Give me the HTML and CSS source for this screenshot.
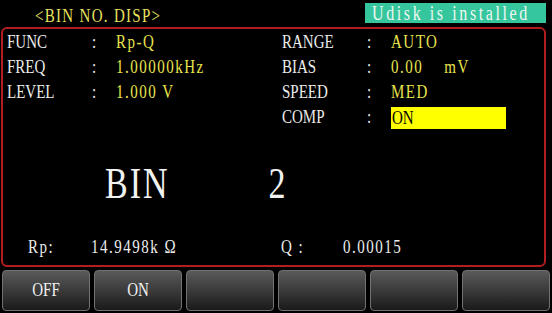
FILE: index.html
```html
<!DOCTYPE html>
<html lang="en">
<head>
    <meta charset="UTF-8">
    <meta name="viewport" content="width=device-width, initial-scale=1.0">
    <title>BIN NO. DISP</title>
    <link rel="stylesheet" href="styles.css">
</head>
<body>
    <div class="screen">
        <header class="topbar">
            <span class="title">&lt;BIN NO. DISP&gt;</span>
            <span class="udisk"><span class="txt">Udisk is installed</span></span>
        </header>

        <main class="panel">
            <div class="params">
                <div class="col">
                    <div class="row"><span class="key">FUNC</span><span class="sep">:</span><span class="val">Rp-Q</span></div>
                    <div class="row"><span class="key">FREQ</span><span class="sep">:</span><span class="val">1.00000kHz</span></div>
                    <div class="row"><span class="key">LEVEL</span><span class="sep">:</span><span class="val">1.000 V</span></div>
                </div>
                <div class="col">
                    <div class="row"><span class="key">RANGE</span><span class="sep">:</span><span class="val">AUTO</span></div>
                    <div class="row"><span class="key">BIAS</span><span class="sep">:</span><span class="val">0.00    mV</span></div>
                    <div class="row"><span class="key">SPEED</span><span class="sep">:</span><span class="val">MED</span></div>
                    <div class="row"><span class="key">COMP</span><span class="sep">:</span><span class="hl"><span class="val">ON</span></span></div>
                </div>
            </div>

            <div class="bin">
                <span class="big">BIN</span>
                <span class="big num">2</span>
            </div>

            <div class="reading">
                <span class="txt">Rp:</span>
                <span class="txt">14.9498k Ω</span>
                <span class="txt">Q :</span>
                <span class="txt">0.00015</span>
            </div>
        </main>

        <nav class="softkeys">
            <button><span class="txt">OFF</span></button>
            <button><span class="txt">ON</span></button>
            <button></button>
            <button></button>
            <button></button>
            <button></button>
        </nav>
    </div>
</body>
</html>
```

FILE: styles.css
```css
* {
    box-sizing: border-box;
}

body {
    margin: 0;
    background-color: #000000;
    color: #ececec;
    font-family: "Liberation Serif", "Times New Roman", serif;
    font-size: 15px;
}

.screen {
    width: 552px;
    height: 313px;
    display: flex;
    flex-direction: column;
    overflow: hidden;
}

/* header */
.topbar {
    height: 27px;
    display: flex;
    align-items: flex-start;
    padding: 0 6px 0 35px;
}

.title {
    display: inline-block;
    margin-top: 6px;
    line-height: 18px;
    color: #e8e25e;
    letter-spacing: 1.3px;
    white-space: pre;
    transform: scaleY(1.3);
}

.udisk {
    margin-left: auto;
    margin-top: 3px;
    width: 181px;
    height: 20px;
    padding-left: 7px;
    line-height: 20px;
    background-color: #36c69e;
    color: #eef8f2;
    font-size: 16px;
    letter-spacing: 2.6px;
}

/* main panel */
.panel {
    width: 545px;
    height: 240px;
    margin-left: 1px;
    border: 2px solid #b21d1f;
    border-radius: 6px;
    display: flex;
    flex-direction: column;
}

.params {
    display: grid;
    grid-template-columns: 275px 1fr;
    padding: 1px 0 0 4px;
}

.row {
    display: grid;
    grid-template-columns: 85px 24px 1fr;
    align-items: center;
    height: 25px;
}

.key,
.sep,
.val,
.txt {
    display: inline-block;
    white-space: pre;
    transform: scaleY(1.3);
}

.val,
.reading .txt {
    letter-spacing: 1.5px;
}

.val {
    color: #e8e44e;
}

.hl {
    width: 115px;
    height: 22px;
    padding-left: 1px;
    line-height: 22px;
    background-color: #ffff00;
}

.hl .val {
    color: #000000;
    letter-spacing: 0;
}

.bin {
    height: 106px;
    display: flex;
    align-items: center;
    padding-left: 102px;
}

.big {
    display: inline-block;
    font-size: 34px;
    letter-spacing: 2px;
    color: #f2f2f2;
    transform: scaleY(1.33);
}

.num {
    margin-left: 99px;
}

.reading {
    height: 22px;
    display: grid;
    grid-template-columns: 63px 190px 62px 1fr;
    align-items: center;
    padding-left: 25px;
}

/* soft keys */
.softkeys {
    display: flex;
    gap: 4px;
    height: 41px;
    margin-top: 3px;
    padding: 0 2px;
}

.softkeys button {
    flex: 1;
    border: 1px solid #727272;
    border-radius: 4px;
    background: linear-gradient(#5a5a5a, #1a1a1a);
    color: #f2f2f2;
    font-family: inherit;
    font-size: 15px;
    padding: 0;
}
```
